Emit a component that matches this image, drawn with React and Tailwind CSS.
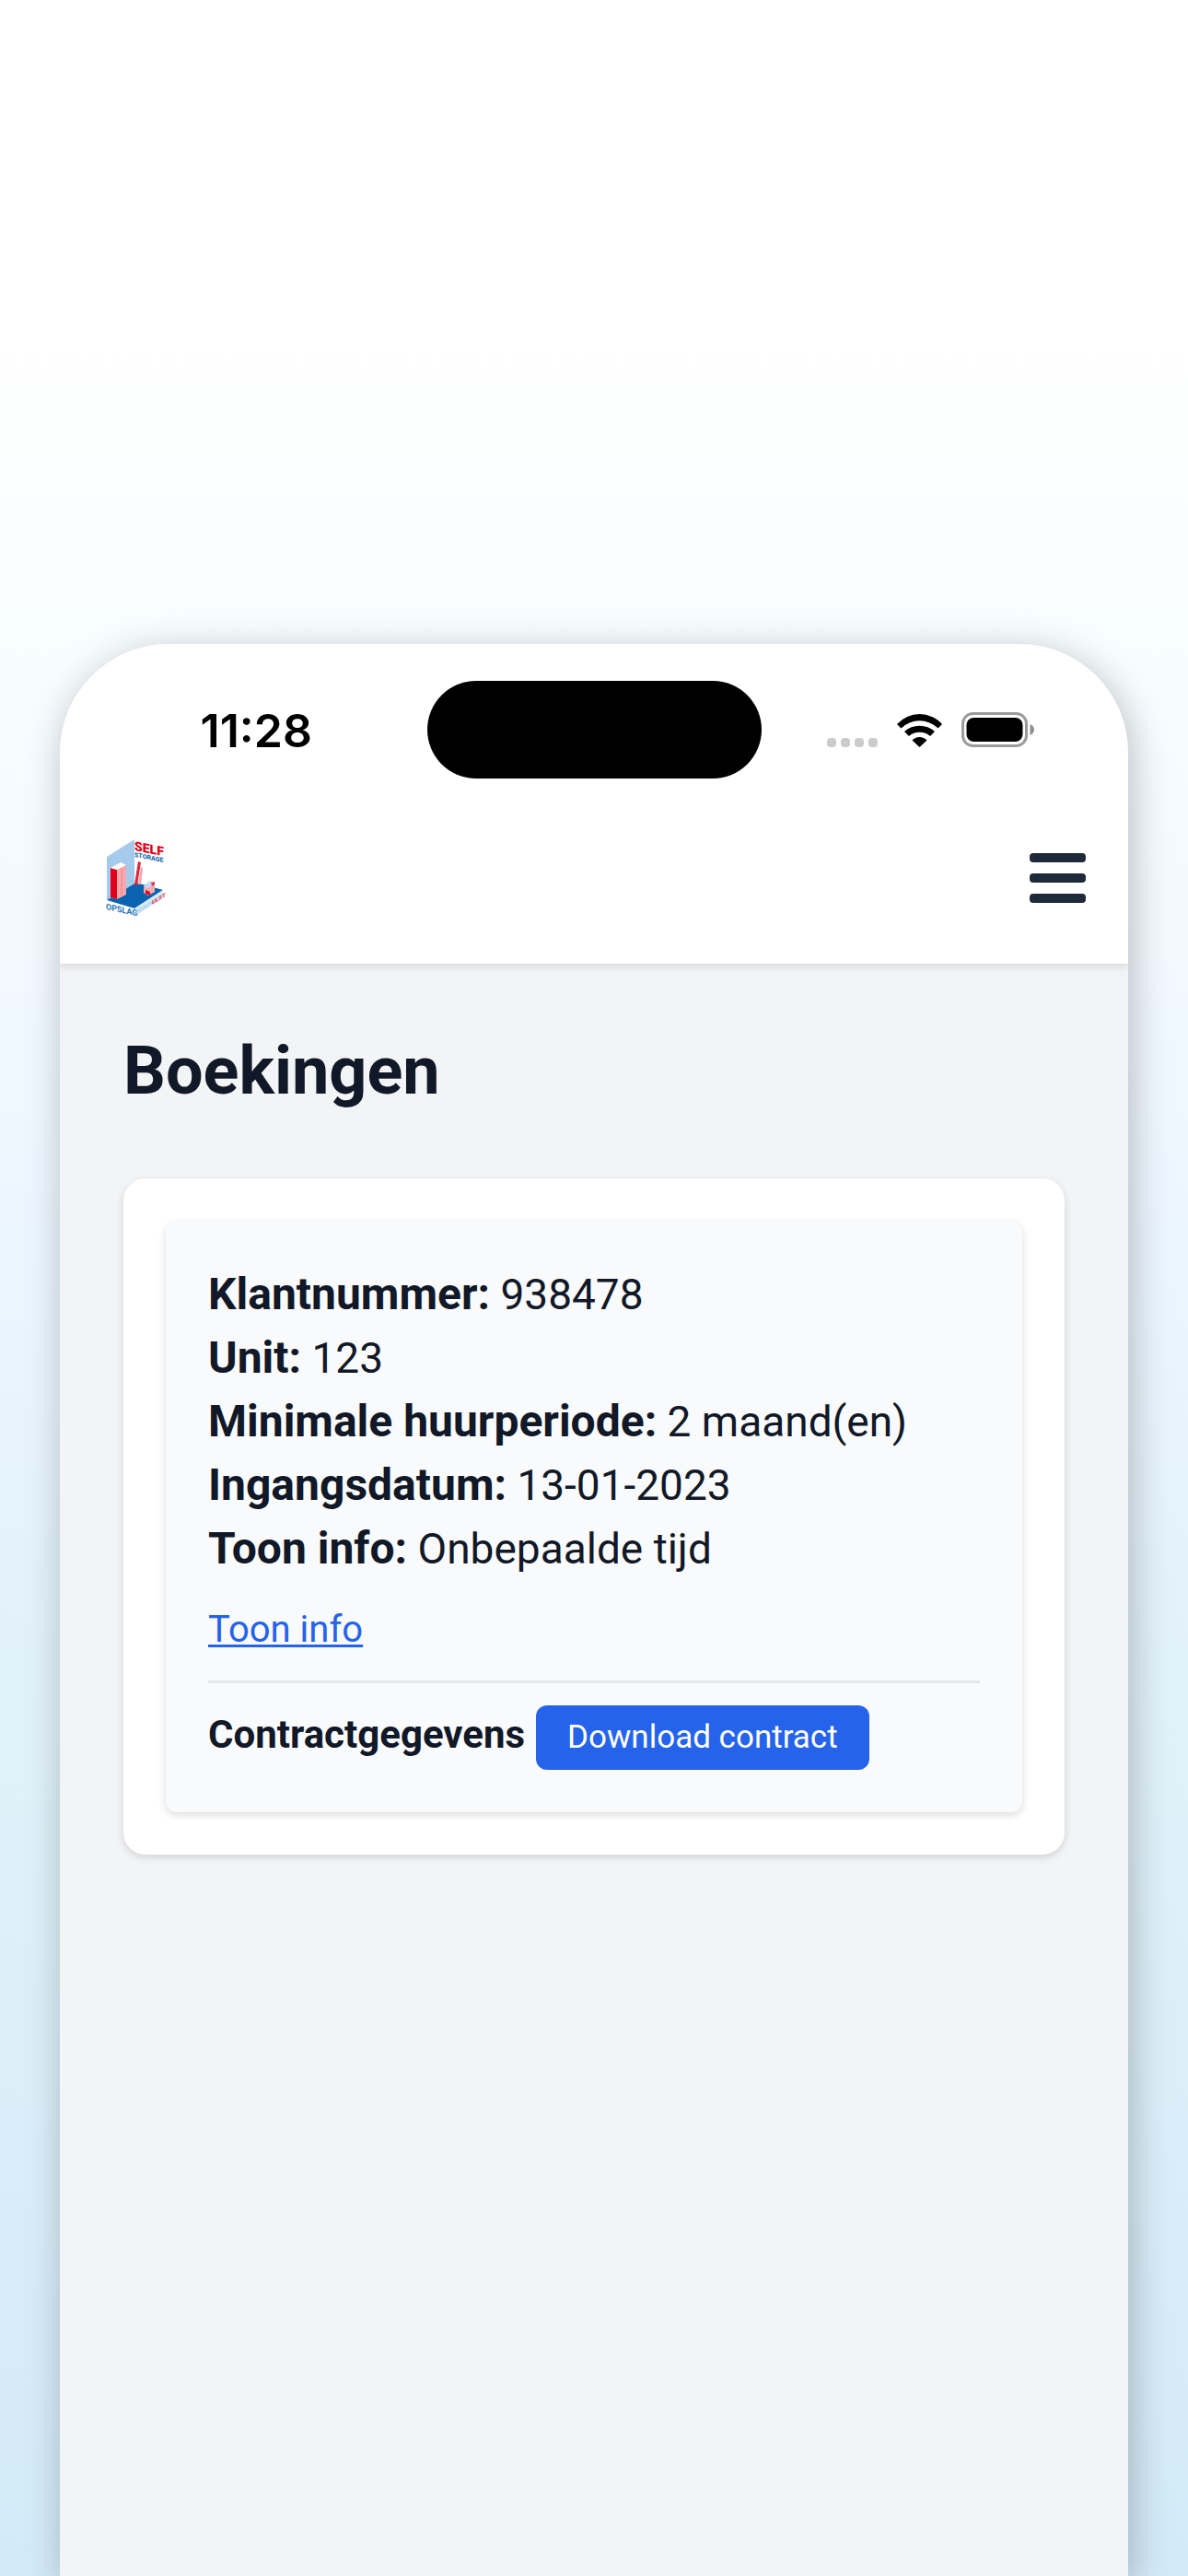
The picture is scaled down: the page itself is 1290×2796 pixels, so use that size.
import React, { useState } from "react";

const bookings = [
  {
    id: 1,
    details: [
      { label: "Klantnummer", value: "938478" },
      { label: "Unit", value: "123" },
      { label: "Minimale huurperiode", value: "2 maand(en)" },
      { label: "Ingangsdatum", value: "13-01-2023" },
      { label: "Toon info", value: "Onbepaalde tijd" },
    ],
  },
];

const WifiIcon = () => (
  <svg className="w-[49px] h-9" viewBox="0 0 49 36" aria-hidden="true">
    <path d="M0 11A32.800 32.800 0 0 1 49 11L44.500 15.500A28.500 28.500 0 0 0 4.500 15.500Z" />
    <path d="M8 19A24.800 24.800 0 0 1 41 19L36 24A17.800 17.800 0 0 0 13 24Z" />
    <path d="M16.500 28.500A10.900 10.900 0 0 1 32.500 28.500L24.500 36Z" />
  </svg>
);

const BatteryIcon = () => (
  <svg className="w-20 h-[38px]" viewBox="0 0 80 38" aria-hidden="true">
    <rect x="1.5" y="1.5" width="69" height="35" rx="11" fill="none" stroke="#9b9b9b" strokeWidth="3" />
    <rect x="5.500" y="6" width="61" height="26" rx="8" fill="#000" />
    <path d="M74.500 13c3 1 4.500 3.500 4.500 6s-1.500 5-4.500 6Z" fill="#8f8f8f" />
  </svg>
);

const StatusBar = () => (
  <div className="grid grid-cols-[1fr_363px_1fr] items-start pt-10">
    <span className="justify-self-center pl-7 pt-6 font-[Inter,sans-serif] text-[50px] leading-[60px] font-semibold text-black">
      11:28
    </span>
    <div className="h-[106px] rounded-full bg-black" />
    <div className="flex items-end gap-[21px] justify-self-start pl-[71px] pt-[34px]">
      <div className="flex gap-[5px]">
        <span className="size-[10px] rounded bg-[#cbcbcb]" />
        <span className="size-[10px] rounded bg-[#cbcbcb]" />
        <span className="size-[10px] rounded bg-[#cbcbcb]" />
        <span className="size-[10px] rounded bg-[#cbcbcb]" />
      </div>
      <WifiIcon />
      <BatteryIcon />
    </div>
  </div>
);

const Logo = () => (
  <svg
    className="w-[72px] h-[92px]"
    viewBox="-4 -4 72 92"
    fontFamily="Roboto, sans-serif"
    role="img"
    aria-label="Self Storage Opslag"
  >
    {/* back wall and floor */}
    <path d="M1 19 31 0v49L1 66Z" fill="#a5cbec" />
    <path d="M1 66 33 47l29 8-31 20Z" fill="#0a63ae" />
    <path d="M31 75 62 55v8L31 84Z" fill="#d5e8f8" />
    {/* wardrobe */}
    <path d="M5 31 16 25l6 3v32L12 65l-7-2Z" fill="#f6a9ad" />
    <path d="M5 31 12 33v32l-7-2Z" fill="#e2001a" />
    <path d="M5 31 16 25l6 3-10 5Z" fill="#fff" />
    <path d="M17 31v30" stroke="#e4757e" strokeWidth=".7" />
    {/* planks */}
    <path d="m35 24 3 1-4 25-3-1Z" fill="#e2263a" />
    <path d="m38 30 2 1-2 18h-3Z" fill="#f3a5ac" />
    {/* boxes */}
    <path d="m41 51 7-6 5 3v9l-7 4-5-3Z" fill="#f4acb2" />
    <path d="m43 55 5 2v4l-5-2Z" fill="#e2001a" />
    <path d="m41 51 7-6 5 3-7 5Z" fill="#bfdcf2" />
    <path d="m49 47 4-1v3l-3 2Z" fill="#e2354a" />
    <g transform="translate(31 12) skewY(11)">
      <text fontSize="14" fontWeight="900" fill="#e2001a">SELF</text>
    </g>
    <g transform="translate(31 19) skewY(11)">
      <text fontSize="7" fontWeight="900" fill="#1c6db1">STORAGE</text>
    </g>
    <g transform="translate(0 76) skewY(12)">
      <text fontSize="9" fontWeight="600" fill="#1268b1">OPSLAG</text>
    </g>
    <g transform="translate(32 82) skewY(-32)">
      <text fontSize="6" fontWeight="600" fill="#a9cdec">BOXEN</text>
    </g>
    <g transform="translate(50 71) skewY(-32)">
      <text fontSize="6" fontWeight="800" fill="#e2354a">ULST</text>
    </g>
  </svg>
);

const Header = ({ menuOpen, toggleMenu }) => (
  <header className="flex items-center justify-between px-[46px] pt-[62px] pb-[47px]">
    <a href="#home">
      <Logo />
    </a>
    <button
      type="button"
      aria-label="Menu"
      aria-expanded={menuOpen}
      onClick={toggleMenu}
      className="flex flex-col gap-3"
    >
      <span className="h-[10px] w-[61px] rounded bg-gray-800" />
      <span className="h-[10px] w-[61px] rounded bg-gray-800" />
      <span className="h-[10px] w-[61px] rounded bg-gray-800" />
    </button>
  </header>
);

const BookingCard = ({ booking }) => (
  <article className="rounded-xl bg-[#f9fafb] p-[46px] shadow-[0_3px_8px_rgba(0,0,0,0.14)]">
    {booking.details.map(({ label, value }) => (
      <p key={label} className="text-[46px] leading-[69px]">
        <strong className="text-[48px] leading-none font-bold">{label}:</strong> {value}
      </p>
    ))}
    <a
      href="#info"
      className="mt-6 inline-block text-[40px] leading-[58px] text-[#2563eb] underline decoration-[3px] underline-offset-[3px]"
    >
      Toon info
    </a>
    <div className="mt-[26px] flex items-baseline gap-3 border-t-[3px] border-gray-200 pt-6">
      <strong className="text-[42px] leading-[58px] font-bold">Contractgegevens</strong>
      <button
        type="button"
        className="rounded-xl bg-[#2563eb] px-[34px] py-[11px] text-[35px] leading-[48px] text-white"
      >
        Download contract
      </button>
    </div>
  </article>
);

export default function App() {
  const [menuOpen, setMenuOpen] = useState(false);

  return (
    <div className="flex min-h-screen flex-col overflow-hidden bg-[linear-gradient(to_bottom,#fff_13%,#f8fdff_25%,#eff7ff_43%,#e2f2fa_64%,#d3eaf8)] px-[65px] pt-[699px] font-[Roboto,sans-serif] text-[#111827]">
      <div className="flex flex-1 flex-col overflow-hidden rounded-t-[118px] bg-[#f3f4f6] shadow-[4px_8px_40px_rgba(0,0,0,0.25)]">
        <div className="bg-white shadow-[0_3px_9px_rgba(0,0,0,0.12)]">
          <StatusBar />
          <Header menuOpen={menuOpen} toggleMenu={() => setMenuOpen(!menuOpen)} />
        </div>
        <main className="px-[69px] pt-[71px]">
          <h1 className="text-[72px] leading-[92px] font-bold">Boekingen</h1>
          <section className="mt-[70px] rounded-3xl bg-white p-[46px] shadow-[0_3px_9px_rgba(0,0,0,0.14)]">
            {bookings.map((booking) => (
              <BookingCard key={booking.id} booking={booking} />
            ))}
          </section>
        </main>
      </div>
    </div>
  );
}
